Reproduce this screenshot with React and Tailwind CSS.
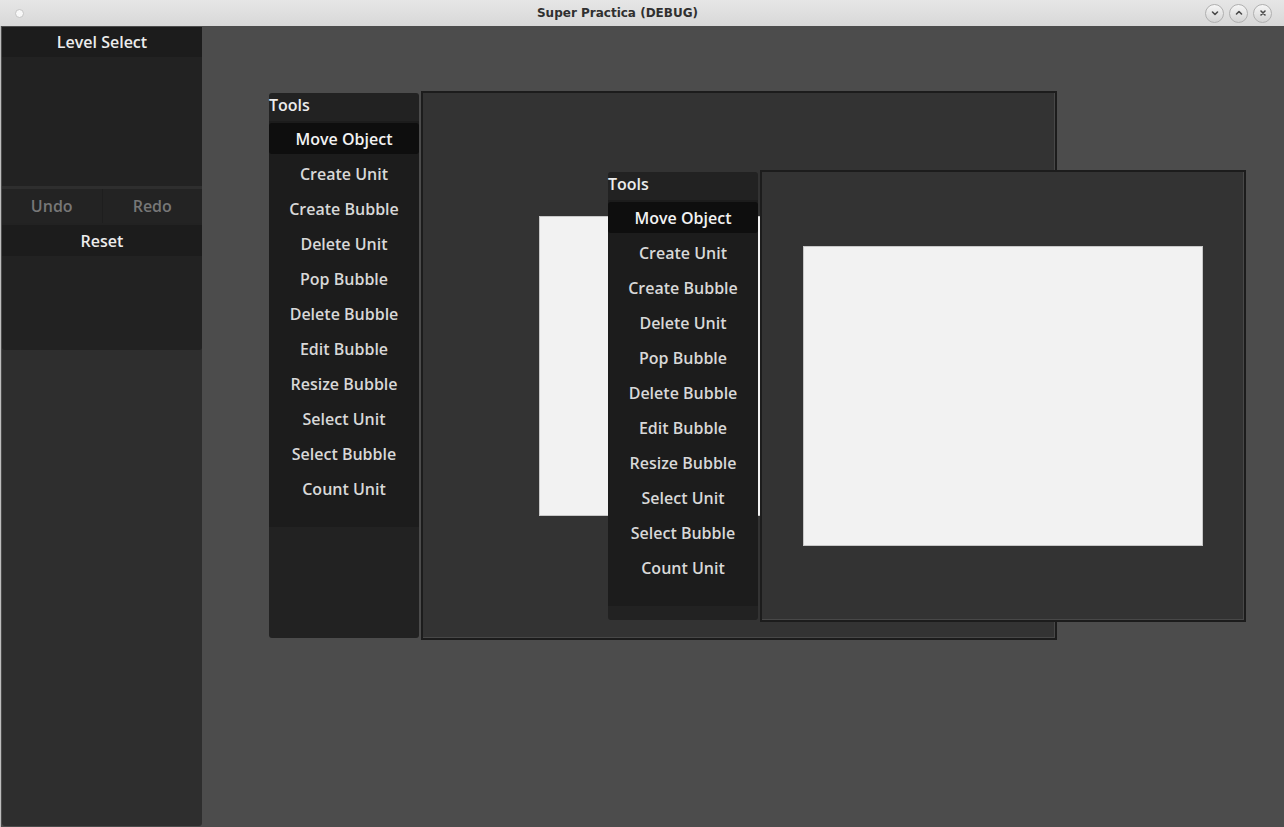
import { useState } from 'react';

const TOOLS = [
  'Move Object',
  'Create Unit',
  'Create Bubble',
  'Delete Unit',
  'Pop Bubble',
  'Delete Bubble',
  'Edit Bubble',
  'Resize Bubble',
  'Select Unit',
  'Select Bubble',
  'Count Unit',
];

const font = { fontFamily: '"Open Sans", "Noto Sans", sans-serif' };

function TitleButton({ children }) {
  return (
    <div className="w-[19px] h-[19px] rounded-full border border-[#b0b0b0] bg-gradient-to-b from-[#f6f6f6] to-[#d4d4d4] flex items-center justify-center">
      <svg width="10" height="10" viewBox="0 0 10 10" fill="none" stroke="#4a4a4a" strokeWidth="1.6" strokeLinecap="round" strokeLinejoin="round">
        {children}
      </svg>
    </div>
  );
}

function ToolsPanel({ active, onPick, listH, panelH }) {
  return (
    <div className="w-[150px] bg-[#222222] rounded-[3px] flex flex-col" style={{ height: panelH }}>
      <div className="h-[28px] flex items-center text-[16px] font-semibold text-[#ececec] pb-[4px]">Tools</div>
      <div className="bg-[#1c1c1c] flex flex-col" style={{ height: listH }}>
        {TOOLS.map((t) => (
          <div key={t} className="h-[35px] py-[2px] flex" onClick={() => onPick(t)}>
            <div
              className={`flex-1 flex items-center justify-center text-[16px] font-semibold rounded-[3px] ${
                t === active ? 'bg-[#0e0e0e] text-[#f2f2f2]' : 'text-[#d8d8d8]'
              }`}
            >
              {t}
            </div>
          </div>
        ))}
      </div>
    </div>
  );
}

function Canvas({ w, h, padL, padT }) {
  return (
    <div
      className="bg-[#333333] border-2 border-[#1c1c1c] shadow-[inset_-1px_-1px_0_#484848]"
      style={{ width: w, height: h, paddingLeft: padL, paddingTop: padT }}
    >
      <div className="w-[400px] h-[300px] bg-[#f2f2f2] border border-[#c8c8c8]" />
    </div>
  );
}

export default function App() {
  const [tool, setTool] = useState('Move Object');

  return (
    <div className="w-[1284px] h-[827px] flex flex-col bg-[#d0d0d0] overflow-hidden" style={font}>
      {/* barre de titre */}
      <div className="h-[26px] bg-gradient-to-b from-[#e6e6e6] to-[#d8d8d8] flex items-center px-[15px] relative shrink-0">
        <div className="w-[9px] h-[9px] rounded-full bg-[#f8f8f8] border border-[#c4c4c4]" />
        <div
          className="absolute left-0 right-[49px] text-center text-[12px] font-bold text-[#303030]"
          style={{ fontFamily: '"DejaVu Sans", sans-serif' }}
        >
          Super Practica (DEBUG)
        </div>
        <div className="ml-auto flex gap-[5px] mr-[-3px]">
          <TitleButton><path d="M2.5 4 L5 6.5 L7.5 4" /></TitleButton>
          <TitleButton><path d="M2.5 6 L5 3.5 L7.5 6" /></TitleButton>
          <TitleButton><path d="M3 3 L7 7 M7 3 L3 7" /></TitleButton>
        </div>
      </div>

      <div className="flex-1 flex bg-[#4c4c4c] pl-[1px] pr-[2px] pb-[1px] border-l border-[#bdbdbd]">
        {/* panneau latéral */}
        <div className="w-[200px] bg-[#2e2e2e] rounded-b-[3px] flex flex-col mt-[1px] text-[16px] font-semibold">
          <div className="h-[30px] bg-[#1c1c1c] flex items-center justify-center text-[#ececec]">Level Select</div>
          <div className="h-[129px] bg-[#222222]" />
          <div className="h-[3px] bg-[#2e2e2e]" />
          <div className="h-[34px] flex bg-[#232323]">
            <div className="flex-1 flex items-center justify-center text-[#777777] border-r border-[#1e1e1e]">Undo</div>
            <div className="flex-1 flex items-center justify-center text-[#777777]">Redo</div>
          </div>
          <div className="h-[2px] bg-[#222222]" />
          <div className="h-[31px] bg-[#1c1c1c] flex items-center justify-center text-[#ececec]">Reset</div>
          <div className="h-[94px] bg-[#222222] rounded-b-[3px]" />
        </div>

        {/* zone de travail: fenêtres superposées */}
        <div className="flex-1 relative">
          <div className="absolute left-[67px] top-[65px] flex items-start gap-[2px]">
            <div className="mt-[2px]">
              <ToolsPanel active={tool} onPick={setTool} listH={406} panelH={545} />
            </div>
            <Canvas w={636} h={549} padL={116} padT={123} />
          </div>
          <div className="absolute left-[406px] top-[144px] flex items-start gap-[2px]">
            <div className="mt-[2px]">
              <ToolsPanel active={tool} onPick={setTool} listH={406} panelH={448} />
            </div>
            <Canvas w={486} h={452} padL={41} padT={74} />
          </div>
        </div>
      </div>
    </div>
  );
}
